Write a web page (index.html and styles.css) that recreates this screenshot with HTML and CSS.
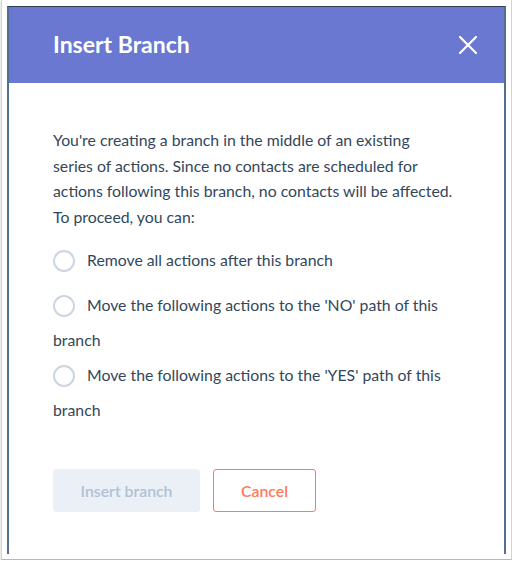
FILE: index.html
```html
<!DOCTYPE html>
<html>
<head>
<meta charset="utf-8">
<link rel="stylesheet" href="styles.css">
</head>
<body>
<div class="window">
  <div class="modal">
    <div class="header">
      <h1 class="title">Insert Branch</h1>
      <svg class="close" width="18" height="18" viewBox="0 0 18 18"><path d="M1 1 L17 17 M17 1 L1 17" stroke="#fff" stroke-width="2.2" stroke-linecap="square"/></svg>
    </div>
    <div class="body">
      <p class="intro">You're creating a branch in the middle of an existing<br>series of actions. Since no contacts are scheduled for<br>actions following this branch, no contacts will be affected.<br>To proceed, you can:</p>
      <div class="option option-first"><span class="radio"></span>Remove all actions after this branch</div>
      <div class="option"><span class="radio"></span>Move the following actions to the 'NO' path of this branch</div>
      <div class="option"><span class="radio"></span>Move the following actions to the 'YES' path of this branch</div>
      <div class="buttons">
        <button class="btn btn-disabled">Insert branch</button>
        <button class="btn btn-cancel">Cancel</button>
      </div>
    </div>
  </div>
</div>
</body>
</html>
```
FILE: styles.css
```css
html, body {
  margin: 0;
  padding: 0;
  background: #ffffff;
}
.window {
  box-sizing: border-box;
  margin-left: 1px;
  width: 511px;
  height: 560px;
  border-left: 1px solid #d4d4d4;
  border-right: 1px solid #d4d4d4;
  border-bottom: 1px solid #b8b8b8;
  box-shadow: 0 1px 2px rgba(0,0,0,0.25);
  padding: 6px 0 0 5px;
  font-family: Lato, "Open Sans", sans-serif;
}
.modal {
  box-sizing: border-box;
  width: 499px;
  height: 548px;
  border-left: 2px solid #516f90;
  border-right: 2px solid #516f90;
  border-top: 1px solid #2d3e50;
  background: #fff;
}
.header {
  height: 76px;
  background: #6a78d1;
  display: flex;
  align-items: center;
  justify-content: space-between;
  padding: 0 27px 0 44px;
}
.title {
  margin: 0;
  color: #fff;
  font-size: 23px;
  font-weight: 700;
  padding-bottom: 2px;
}
.close {
  display: block;
}
.body {
  padding: 44px 44px 0 44px;
  color: #33475b;
  font-size: 15.8px;
}
.intro {
  margin: 0 0 12px 0;
  line-height: 25.7px;
  white-space: nowrap;
}
.option {
  line-height: 35px;
  width: 406px;
}
.option-first {
  margin-bottom: 10px;
}
.radio {
  display: inline-block;
  box-sizing: border-box;
  width: 22px;
  height: 22px;
  border: 2px solid #cbd6e2;
  border-radius: 50%;
  vertical-align: -6px;
  margin-right: 12px;
}
.buttons {
  display: flex;
  gap: 13px;
  margin-top: 42px;
}
.btn {
  box-sizing: border-box;
  height: 43px;
  border-radius: 3px;
  font-family: Lato, "Open Sans", sans-serif;
  font-size: 15.8px;
  font-weight: 600;
  padding: 0;
}
.btn-disabled {
  width: 147px;
  background: #eaf0f6;
  border: 1px solid #eaf0f6;
  color: #b0c1d4;
}
.btn-cancel {
  width: 103px;
  background: #fff;
  border: 1px solid #ff7a59;
  color: #ff7a59;
}
```
